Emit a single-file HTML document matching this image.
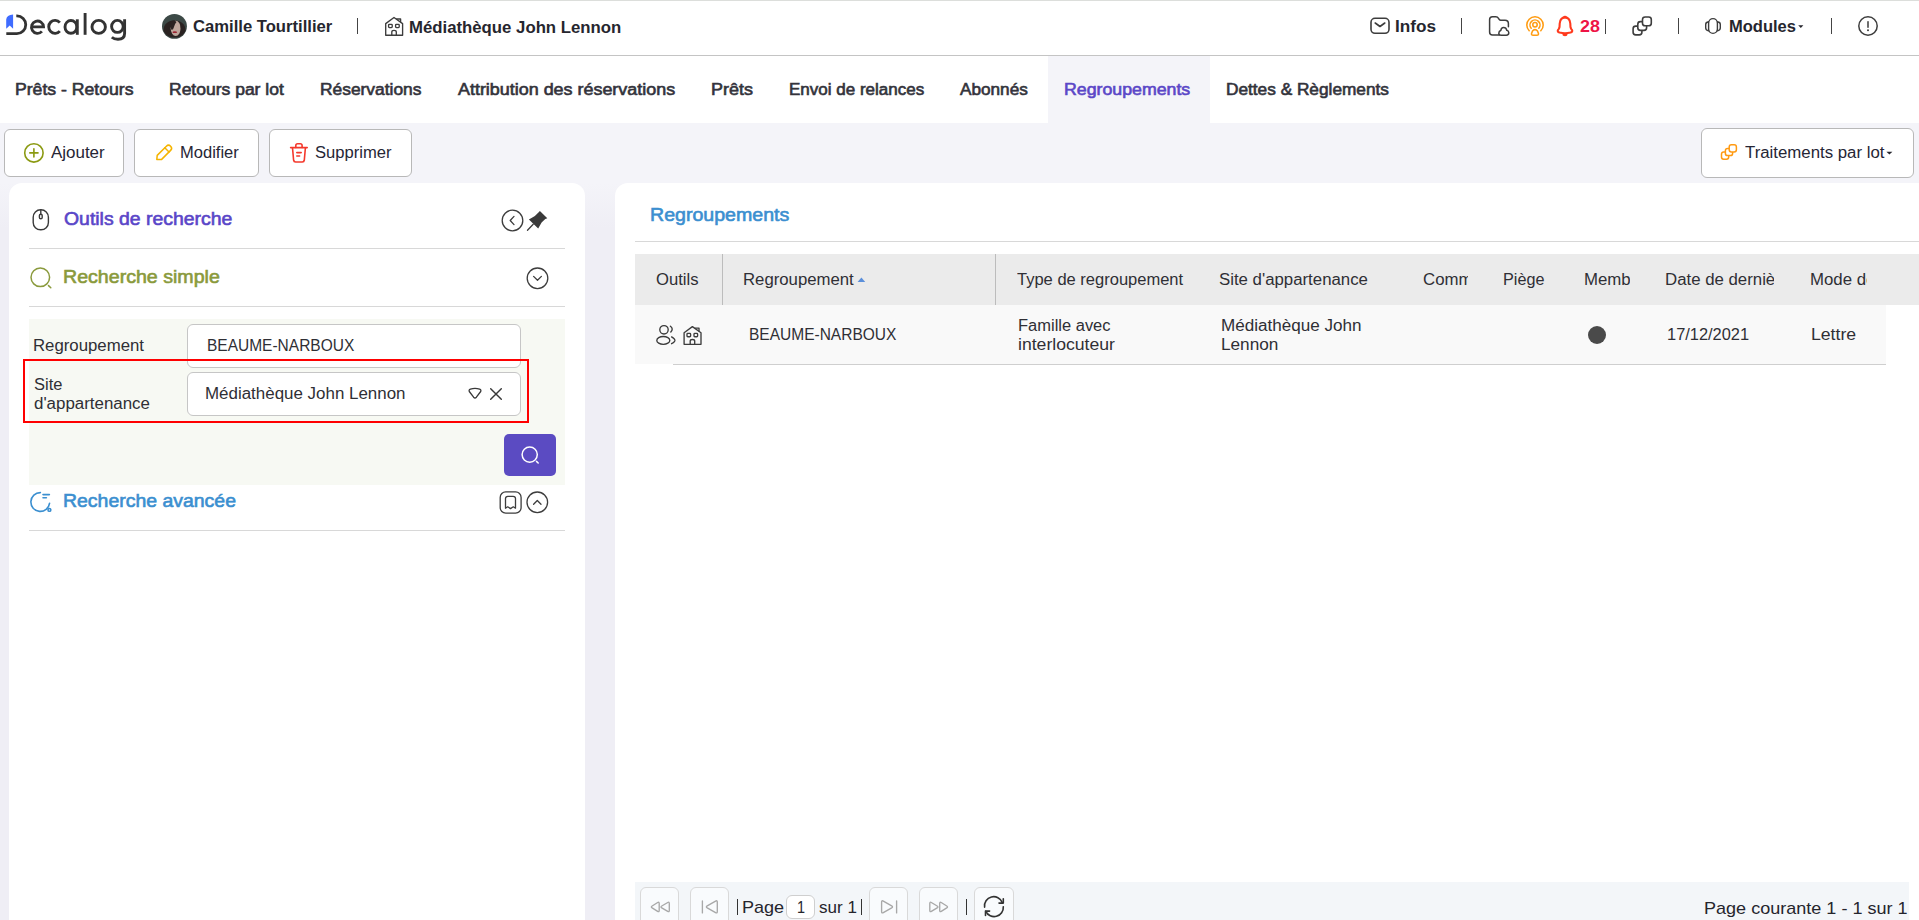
<!DOCTYPE html>
<html><head><meta charset="utf-8"><title>Regroupements</title>
<style>
html,body{margin:0;padding:0;}
body{width:1919px;height:920px;overflow:hidden;position:relative;background:#fff;font-family:"Liberation Sans",sans-serif;}
.abs{position:absolute;box-sizing:border-box;}
.t{position:absolute;white-space:nowrap;line-height:1;transform-origin:0 0;}
.btn{position:absolute;box-sizing:border-box;background:#fff;border:1px solid #b8b8b8;border-radius:6px;}
.panel{background:#fff;border-radius:13px;}
.inp{position:absolute;box-sizing:border-box;background:#fff;border:1px solid #c6c6c6;border-radius:6px;}
.pbtn{position:absolute;box-sizing:border-box;height:40px;background:#f9fbfd;border:1px solid #d9d9d9;border-radius:6px;}
svg{position:absolute;overflow:visible;}
</style></head><body>
<div class="abs" style="left:0;top:0;width:1919px;height:1px;background:#dcdedb"></div>
<div class="abs" style="left:0;top:55px;width:1919px;height:1px;background:#c4c4c4"></div>
<div class="abs" style="left:0;top:123px;width:1919px;height:797px;background:#f4f4f9"></div>
<div class="abs" style="left:0;top:183px;width:1919px;height:737px;background:linear-gradient(to bottom,#f4f4f9 0px,#efeef5 45px,#efeef5 100%)"></div>
<div class="abs" style="left:1048px;top:56px;width:162px;height:67px;background:#f4f4f9"></div>
<!-- buttons -->
<div class="btn" style="left:4px;top:129px;width:120px;height:48px"></div>
<div class="btn" style="left:134px;top:129px;width:125px;height:48px"></div>
<div class="btn" style="left:269px;top:129px;width:143px;height:48px"></div>
<div class="btn" style="left:1701px;top:128px;width:213px;height:50px"></div>
<!-- panels -->
<div class="abs panel" style="left:9px;top:183px;width:576px;height:760px"></div>
<div class="abs panel" style="left:615px;top:183px;width:1340px;height:760px"></div>
<!-- left panel internals -->
<div class="abs" style="left:29px;top:248px;width:536px;height:1px;background:#d8d8d8"></div>
<div class="abs" style="left:29px;top:306px;width:536px;height:1px;background:#d8d8d8"></div>
<div class="abs" style="left:29px;top:319px;width:536px;height:166px;background:#f7f9f3"></div>
<div class="abs" style="left:29px;top:530px;width:536px;height:1px;background:#d8d8d8"></div>
<div class="inp" style="left:187px;top:324px;width:334px;height:44px"></div>
<div class="inp" style="left:187px;top:372px;width:334px;height:44px"></div>
<div class="abs" style="left:23px;top:359px;width:506px;height:64px;border:2px solid #ff0000"></div>
<div class="abs" style="left:504px;top:434px;width:52px;height:42px;background:#5b4bc2;border-radius:5px"></div>
<!-- right panel internals -->
<div class="abs" style="left:635px;top:241px;width:1284px;height:1px;background:#d8d8d8"></div>
<div class="abs" style="left:635px;top:254px;width:1284px;height:51px;background:#ebebeb"></div>
<div class="abs" style="left:722px;top:254px;width:1px;height:51px;background:#bcbcbc"></div>
<div class="abs" style="left:995px;top:254px;width:1px;height:51px;background:#bcbcbc"></div>
<div class="abs" style="left:635px;top:305px;width:1251px;height:59px;background:#f9f9f9"></div>
<div class="abs" style="left:673px;top:364px;width:1213px;height:1px;background:#cfcfcf"></div>
<div class="abs" style="left:1588px;top:326px;width:18px;height:18px;border-radius:50%;background:#4a4a4a"></div>
<!-- pager -->
<div class="abs" style="left:635px;top:882px;width:1274px;height:40px;background:#f3f6f9"></div>
<div class="pbtn" style="left:640px;top:887px;width:39px"></div>
<div class="pbtn" style="left:690px;top:887px;width:39px"></div>
<div class="pbtn" style="left:869px;top:887px;width:39px"></div>
<div class="pbtn" style="left:919px;top:887px;width:39px"></div>
<div class="pbtn" style="left:974px;top:887px;width:40px"></div>
<div class="abs" style="left:786px;top:895px;width:29px;height:24px;border:1px solid #cfcfcf;border-radius:6px;background:#fff;box-sizing:border-box"></div>
<div class="abs" style="left:737px;top:899px;width:1px;height:16px;background:#333"></div>
<div class="abs" style="left:861px;top:899px;width:1px;height:16px;background:#333"></div>
<div class="abs" style="left:966px;top:899px;width:1px;height:16px;background:#333"></div>
<!-- header separators -->
<div class="abs" style="left:357px;top:18px;width:1px;height:16px;background:#444"></div>
<div class="abs" style="left:1461px;top:18px;width:1px;height:16px;background:#444"></div>
<div class="abs" style="left:1605px;top:19px;width:1px;height:15px;background:#444"></div>
<div class="abs" style="left:1678px;top:18px;width:1px;height:16px;background:#444"></div>
<div class="abs" style="left:1831px;top:18px;width:1px;height:16px;background:#444"></div>
<svg style="left:0;top:0" width="1919" height="920" viewBox="0 0 1919 920">
<path d="M857.6,282 L865.2,282 L861.4,277.6Z" fill="#5b8fda"/>
<path d="M1886.4,151.8 L1892.4,151.8 L1889.4,154.6Z" fill="#26262e"/>
</svg>

<svg style="left:0;top:0" width="1919" height="920" viewBox="0 0 1919 920" fill="none" stroke-linecap="round" stroke-linejoin="round">
<!-- logo -->
<path d="M6.2,28.8 L6.2,19.5 Q6.6,15 13.1,14.4 L13.1,28.8 L9.7,25.6 Z" fill="#3f6cff" stroke="none"/>
<path d="M16.3,15.9 L16.9,15.9 A8.85,8.85 0 0 1 16.9,33.6 L6.3,33.6" stroke="#333" stroke-width="2.8" stroke-linecap="butt"/>
<!-- avatar -->
<circle cx="174.45" cy="26.35" r="12.45" fill="#3c4946"/>
<path d="M163.5,31 Q163.5,21 174.5,20.5 Q185.5,21 185.5,31 A12.45,12.45 0 0 1 163.5,31Z" fill="#2a2221"/>
<ellipse cx="175.7" cy="28.4" rx="5" ry="7.6" fill="#bea69c"/>
<path d="M170,21.5 Q174,19.5 176.5,22 Q174.5,24 173.8,27.5 Q173,30.5 171.2,29.5 Q170.5,25 170,21.5Z" fill="#2a2221"/>
<path d="M180.5,24 Q181.5,30 179.5,36 L183,34 Q183.5,28 180.5,24Z" fill="#2a2221"/>
<ellipse cx="174.8" cy="32.2" rx="2.3" ry="0.9" fill="#9c2633"/>
<!-- house header -->
<g stroke="#3d3d3d" stroke-width="1.35">
<path d="M385.7,35.2 L385.7,23.6 L394,17.5 L402.6,23.6 L402.6,35.2 Z"/>
<path d="M396.6,19 L400.6,19 L400.6,21.8"/>
<rect x="388.6" y="24.3" width="3.6" height="3.3" rx="0.8"/>
<rect x="395.6" y="24.3" width="3.6" height="3.3" rx="0.8"/>
<path d="M391.8,35.2 L391.8,32 Q391.8,30.4 394,30.4 Q396.3,30.4 396.3,32 L396.3,35.2"/>
</g>
<!-- mail -->
<g stroke="#3d3d3d" stroke-width="1.6">
<rect x="1371" y="18.3" width="18" height="15" rx="4"/>
<path d="M1375.2,23 L1380,26.5 L1384.8,23"/>
</g>
<!-- folder cloud -->
<g stroke="#3d3d3d" stroke-width="1.5">
<path d="M1499.3,35 L1492.5,35 Q1489.6,35 1489.6,32 L1489.6,19.6 Q1489.6,16.8 1492.5,16.8 L1495.8,16.8 Q1497.6,16.8 1498.5,18.3 L1499.3,19.6 Q1499.8,20.2 1500.6,20.2 L1505,20.2 Q1508.4,20.2 1508.4,23.5 L1508.4,26.8"/>
<path d="M1501.2,35.2 L1506.3,35.2 Q1508.8,35.2 1508.8,32.8 Q1508.8,30.8 1506.8,30.3 Q1506.2,27.4 1503.6,27.4 Q1501.1,27.4 1500.9,30.3 Q1498.8,31.2 1498.8,33.2 Q1498.8,35.2 1501.2,35.2Z"/>
</g>
<!-- podcast -->
<g stroke="#ff9c12" stroke-width="1.55">
<path d="M1529.2,30.8 A8.2,8.2 0 1 1 1540.8,30.8"/>
<path d="M1531.2,28.2 A5,5 0 1 1 1538.8,28.2"/>
<circle cx="1535" cy="24.8" r="2.2"/>
<path d="M1533.2,35.2 L1536.8,35.2 Q1538.9,35.2 1538.4,33.2 L1537.4,30.9 Q1536.6,29.6 1535,29.6 Q1533.4,29.6 1532.6,30.9 L1531.6,33.2 Q1531.1,35.2 1533.2,35.2Z"/>
</g>
<!-- bell -->
<g stroke="#ff3a1e" stroke-width="2.1">
<path d="M1565,17.4 Q1569.8,17.6 1570.3,23.5 L1570.5,27.2 Q1570.7,28.8 1572,30 Q1573,31.8 1570.5,32.6 Q1565,33.9 1559.5,32.6 Q1557,31.8 1558,30 Q1559.3,28.8 1559.5,27.2 L1559.7,23.5 Q1560.2,17.6 1565,17.4Z"/>
</g>
<ellipse cx="1565" cy="34.6" rx="2.6" ry="1.6" fill="#ff3a1e"/>
<ellipse cx="1565" cy="16.7" rx="1.8" ry="1" fill="#ff3a1e"/>
<!-- copy header -->
<g stroke="#3d3d3d" stroke-width="1.6" fill="#fff">
<rect x="1633.1" y="26.1" width="8.8" height="8.8" rx="2.6"/>
<rect x="1637.8" y="21.6" width="8.8" height="8.8" rx="2.6"/>
<rect x="1642.5" y="17" width="8.8" height="8.8" rx="2.6"/>
</g>
<!-- modules -->
<g stroke="#3d3d3d" stroke-width="1.4">
<rect x="1708.6" y="18.6" width="8.8" height="14.8" rx="4.4"/>
<path d="M1708.6,21.8 Q1705.7,22.2 1705.7,24.5 L1705.7,28 Q1705.7,30.4 1708.6,30.7"/>
<path d="M1717.4,21.8 Q1720.3,22.2 1720.3,24.5 L1720.3,28 Q1720.3,30.4 1717.4,30.7"/>
</g>
<path d="M1798.2,25.3 L1803.4,25.3 L1800.8,27.9Z" fill="#26262e"/>
<!-- info -->
<g stroke="#3d3d3d" stroke-width="1.5">
<circle cx="1868" cy="26" r="9.2"/>
<path d="M1868,21.8 L1868,27.2"/>
</g>
<circle cx="1868" cy="30.2" r="1" fill="#3d3d3d"/>
<!-- plus circle -->
<g stroke="#8b9a12" stroke-width="1.6">
<circle cx="33.9" cy="152.9" r="9.2"/>
<path d="M29.8,152.9 L38,152.9 M33.9,148.8 L33.9,157"/>
</g>
<!-- pencil -->
<g stroke="#f5b400" stroke-width="1.5">
<path d="M156.8,159.6 L157.2,155.4 L166.4,146.2 Q168.5,144.1 170.6,146.2 Q172.7,148.3 170.6,150.4 L161.4,159.6 Z"/>
<path d="M164.8,147.8 L169,152"/>
</g>
<!-- trash -->
<g stroke="#f4382c" stroke-width="1.6">
<path d="M290.6,147.6 L307.2,147.6"/>
<path d="M295.8,147.4 L295.8,145.6 Q295.8,143.8 297.6,143.8 L300.3,143.8 Q302.1,143.8 302.1,145.6 L302.1,147.4"/>
<path d="M292.5,147.8 L293.6,160.2 Q293.8,162 295.6,162 L302.3,162 Q304.1,162 304.3,160.2 L305.4,147.8"/>
<path d="M296.8,152.6 L301.2,152.6 M296.8,156 L299.6,156"/>
</g>
<!-- copy orange -->
<g stroke="#ff9a12" stroke-width="1.5" fill="#fff">
<rect x="1721.5" y="152" width="7.2" height="7.2" rx="2.2"/>
<rect x="1725.4" y="148.4" width="7.2" height="7.2" rx="2.2"/>
<rect x="1729.2" y="144.7" width="7.2" height="7.2" rx="2.2"/>
</g>
<!-- mouse -->
<g stroke="#3a3a3a" stroke-width="1.4">
<rect x="33.2" y="209.8" width="15.2" height="20" rx="7.4"/>
<rect x="39.4" y="214.2" width="2.8" height="4.6" rx="1.4"/>
<path d="M40.8,210 L40.8,214.2"/>
</g>
<!-- circle left + pin -->
<g stroke="#3d3d3d" stroke-width="1.3">
<circle cx="512.5" cy="220.5" r="10.3"/>
<path d="M514,216.4 L510.2,220.5 L514,224.6"/>
<path d="M533.2,224.3 L527.5,230.2" stroke-width="1.3"/>
</g>
<path d="M539.9,210.9 L547.3,218.2 L545.3,218.9 L541.6,222.6 L538.2,228.6 L528.9,219.4 L534.9,216 L538.7,212.3 Z" fill="#3a3a3a"/>
<!-- search olive -->
<g stroke="#8a9a3c" stroke-width="1.5">
<circle cx="40.3" cy="277.3" r="9.3"/>
<path d="M48.5,285.6 L50.8,287.8"/>
</g>
<!-- circle down -->
<g stroke="#3d3d3d" stroke-width="1.3">
<circle cx="537.5" cy="278.3" r="10.3"/>
<path d="M533.6,276.4 L537.5,280.2 L541.4,276.4"/>
</g>
<!-- dropdown + X -->
<g stroke="#383838" stroke-width="1.3">
<path d="M470.4,389.1 Q475,387.7 479.6,389.1 Q481.4,389.8 480.7,391.5 L476.4,397.2 Q475,398.8 473.6,397.2 L469.3,391.5 Q468.6,389.8 470.4,389.1Z"/>
<path d="M490.7,388.7 L501.3,399.2 M501.3,388.7 L490.7,399.2" stroke-width="1.45"/>
</g>
<!-- white search -->
<g stroke="#fff" stroke-width="1.5">
<circle cx="529.7" cy="454.6" r="7.6"/>
<path d="M536.5,461.4 L538.2,463"/>
</g>
<!-- advanced search -->
<g stroke="#3b8fd0" stroke-width="1.6">
<path d="M40.4,492.6 A9.4,9.4 0 1 0 49.6,503.2"/>
<path d="M43,494.6 L49.4,494.6 M43,497.7 L46.4,497.7"/>
<circle cx="49.4" cy="509.9" r="1.4"/>
</g>
<!-- bookmark + circle up -->
<g stroke="#3d3d3d" stroke-width="1.3">
<rect x="500.2" y="491.9" width="20.9" height="21.2" rx="5.5"/>
<path d="M505.5,508.2 L505.5,498.6 Q505.5,496.3 507.9,496.3 L513.1,496.3 Q515.5,496.3 515.5,498.6 L515.5,508.2 L513.3,506.8 L510.5,508.6 L507.7,506.8 Z"/>
<circle cx="537.3" cy="502.3" r="10.3"/>
<path d="M533.6,504.2 L537.3,500.5 L541,504.2"/>
</g>
<!-- users -->
<g stroke="#3a3a3a" stroke-width="1.35">
<circle cx="664" cy="329.8" r="4.2"/>
<ellipse cx="663.3" cy="340.4" rx="6.5" ry="3.9"/>
<path d="M670.4,326.2 Q673.8,328.8 670.8,332"/>
<path d="M671.6,336.9 Q675.5,339.3 674.8,341 Q674,342.6 671.6,343.7"/>
</g>
<!-- house row -->
<g stroke="#3d3d3d" stroke-width="1.35" transform="translate(298.4,309.1)">
<path d="M385.7,35.2 L385.7,23.6 L394,17.5 L402.6,23.6 L402.6,35.2 Z"/>
<path d="M396.6,19 L400.6,19 L400.6,21.8"/>
<rect x="388.6" y="24.3" width="3.6" height="3.3" rx="0.8"/>
<rect x="395.6" y="24.3" width="3.6" height="3.3" rx="0.8"/>
<path d="M391.8,35.2 L391.8,32 Q391.8,30.4 394,30.4 Q396.3,30.4 396.3,32 L396.3,35.2"/>
</g>
<!-- pager icons -->
<g stroke="#a8a8a8" stroke-width="1.35">
<path d="M652.13,906.00 L657.67,902.55 Q659.20,901.60 659.20,903.40 L659.20,910.50 Q659.20,912.30 657.67,911.35 L652.13,907.90 Q650.60,906.95 652.13,906.00 Z"/>
<path d="M661.75,906.04 L667.75,902.51 Q669.30,901.60 669.30,903.40 L669.30,910.50 Q669.30,912.30 667.75,911.39 L661.75,907.86 Q660.20,906.95 661.75,906.04 Z"/>
<path d="M702.4,900.9 L702.4,912.9"/>
<path d="M707.23,905.90 L715.57,901.10 Q717.30,900.10 717.30,902.10 L717.30,911.60 Q717.30,913.60 715.56,912.61 L707.24,907.89 Q705.50,906.90 707.23,905.90 Z"/>
<path d="M891.67,905.90 L883.33,901.10 Q881.60,900.10 881.60,902.10 L881.60,911.60 Q881.60,913.60 883.34,912.61 L891.66,907.89 Q893.40,906.90 891.67,905.90 Z"/>
<path d="M896.6,900.9 L896.6,912.9"/>
<path d="M946.77,906.00 L941.23,902.55 Q939.70,901.60 939.70,903.40 L939.70,910.50 Q939.70,912.30 941.23,911.35 L946.77,907.90 Q948.30,906.95 946.77,906.00 Z"/>
<path d="M937.16,906.02 L931.34,902.53 Q929.80,901.60 929.80,903.40 L929.80,910.50 Q929.80,912.30 931.34,911.37 L937.16,907.88 Q938.70,906.95 937.16,906.02 Z"/>
</g>
<g stroke="#333" stroke-width="1.6">
<path d="M984.6,907.2 A9.2,9.2 0 0 1 1002.3,902.6"/>
<path d="M1003.3,898.7 L1003.3,903.1 L999,903.1"/>
<path d="M1003.3,906.7 A9.2,9.2 0 0 1 985.8,911.3"/>
<path d="M985.5,915.5 L985.5,911.1 L989.6,911.1"/>
</g>
</svg>
<svg style="left:0;top:0" width="140" height="50" viewBox="0 0 140 50" fill="none" stroke="#333" stroke-width="2.9">
<path d="M31.6,26.9 L43.5,26.9 A6,6.2 0 1 0 41.9,31.4"/>
<path d="M59.8,22.6 A6.3,6.5 0 1 0 59.8,31.1"/>
<ellipse cx="70.9" cy="26.9" rx="5.9" ry="6.4"/>
<path d="M77.3,19.3 L77.3,34.8" stroke-linecap="butt"/>
<path d="M85.1,13 L85.1,34.8" stroke-linecap="butt"/>
<ellipse cx="98.7" cy="26.9" rx="6.7" ry="6.5"/>
<ellipse cx="117.4" cy="26.4" rx="5.8" ry="6"/>
<path d="M124.6,19.3 L124.6,33.5 Q124.6,39.2 118,39.2 Q114,39.2 111.8,37.2" stroke-linecap="butt"/>
</svg>


<div class="t" style="left:192.70px;top:19.00px;font-size:16px;font-weight:bold;color:#26262e;transform:scaleX(1.0394);">Camille Tourtillier</div>
<div class="t" style="left:408.95px;top:20.00px;font-size:16px;font-weight:bold;color:#26262e;transform:scaleX(1.0473);">Médiathèque John Lennon</div>
<div class="t" style="left:1394.93px;top:19.00px;font-size:16px;font-weight:bold;color:#26262e;transform:scaleX(1.0718);">Infos</div>
<div class="t" style="left:1580.00px;top:19.00px;font-size:16px;font-weight:bold;color:#ee1445;transform:scaleX(1.1174);">28</div>
<div class="t" style="left:1728.97px;top:19.00px;font-size:16px;font-weight:bold;color:#26262e;transform:scaleX(1.0314);">Modules</div>
<div class="t" style="left:14.50px;top:82.00px;font-size:16px;-webkit-text-stroke:0.6px currentColor;color:#33333b;transform:scaleX(1.1015);">Prêts - Retours</div>
<div class="t" style="left:168.61px;top:82.00px;font-size:16px;-webkit-text-stroke:0.6px currentColor;color:#33333b;transform:scaleX(1.0939);">Retours par lot</div>
<div class="t" style="left:319.51px;top:82.00px;font-size:16px;-webkit-text-stroke:0.6px currentColor;color:#33333b;transform:scaleX(1.0858);">Réservations</div>
<div class="t" style="left:457.80px;top:82.00px;font-size:16px;-webkit-text-stroke:0.6px currentColor;color:#33333b;transform:scaleX(1.1198);">Attribution des réservations</div>
<div class="t" style="left:710.88px;top:82.00px;font-size:16px;-webkit-text-stroke:0.6px currentColor;color:#33333b;transform:scaleX(1.1226);">Prêts</div>
<div class="t" style="left:788.54px;top:82.00px;font-size:16px;-webkit-text-stroke:0.6px currentColor;color:#33333b;transform:scaleX(1.0627);">Envoi de relances</div>
<div class="t" style="left:960.20px;top:82.00px;font-size:16px;-webkit-text-stroke:0.6px currentColor;color:#33333b;transform:scaleX(1.0734);">Abonnés</div>
<div class="t" style="left:1063.79px;top:82.00px;font-size:16px;-webkit-text-stroke:0.6px currentColor;color:#5b47c7;transform:scaleX(1.1086);">Regroupements</div>
<div class="t" style="left:1225.82px;top:82.00px;font-size:16px;-webkit-text-stroke:0.6px currentColor;color:#33333b;transform:scaleX(1.0777);">Dettes &amp; Règlements</div>
<div class="t" style="left:50.60px;top:145.00px;font-size:16px;color:#262635;transform:scaleX(1.0590);">Ajouter</div>
<div class="t" style="left:180.07px;top:145.00px;font-size:16px;color:#262635;transform:scaleX(1.0322);">Modifier</div>
<div class="t" style="left:315.30px;top:145.00px;font-size:16px;color:#262635;transform:scaleX(1.0366);">Supprimer</div>
<div class="t" style="left:1745.00px;top:145.00px;font-size:16px;color:#262635;transform:scaleX(1.0499);">Traitements par lot</div>
<div class="t" style="left:63.80px;top:210.00px;font-size:18px;-webkit-text-stroke:0.6px currentColor;color:#5a46c8;transform:scaleX(1.0778);">Outils de recherche</div>
<div class="t" style="left:62.71px;top:268.00px;font-size:18px;-webkit-text-stroke:0.6px currentColor;color:#8a9a3c;transform:scaleX(1.0884);">Recherche simple</div>
<div class="t" style="left:33.45px;top:338.00px;font-size:16px;color:#2f2f35;transform:scaleX(1.0484);">Regroupement</div>
<div class="t" style="left:207.13px;top:338.00px;font-size:16px;color:#2f2f35;transform:scaleX(0.9686);">BEAUME-NARBOUX</div>
<div class="t" style="left:33.70px;top:377.00px;font-size:16px;color:#2f2f35;transform:scaleX(1.0299);">Site</div>
<div class="t" style="left:33.90px;top:396.00px;font-size:16px;color:#2f2f35;transform:scaleX(1.0554);">d'appartenance</div>
<div class="t" style="left:205.19px;top:386.00px;font-size:16px;color:#2f2f35;transform:scaleX(1.0581);">Médiathèque John Lennon</div>
<div class="t" style="left:62.67px;top:492.00px;font-size:18px;-webkit-text-stroke:0.6px currentColor;color:#3b8fd0;transform:scaleX(1.0802);">Recherche avancée</div>
<div class="t" style="left:649.61px;top:206.00px;font-size:18px;-webkit-text-stroke:0.6px currentColor;color:#3b8fd0;transform:scaleX(1.0876);">Regroupements</div>
<div class="t" style="left:656.20px;top:272.00px;font-size:16px;color:#2f2f35;transform:scaleX(1.0392);">Outils</div>
<div class="t" style="left:742.85px;top:272.00px;font-size:16px;color:#2f2f35;transform:scaleX(1.0465);">Regroupement</div>
<div class="t" style="left:1017.00px;top:272.00px;font-size:16px;color:#2f2f35;transform:scaleX(1.0319);">Type de regroupement</div>
<div class="t" style="left:1219.20px;top:272.00px;font-size:16px;color:#2f2f35;transform:scaleX(1.0498);">Site d'appartenance</div>
<div class="t" style="left:1502.99px;top:272.00px;font-size:16px;color:#2f2f35;transform:scaleX(1.0119);">Piège</div>
<div class="abs" style="left:0;top:0;width:1468.3px;height:920px;overflow:hidden"><div class="t" style="left:1422.60px;top:272.00px;font-size:16px;color:#2f2f35;transform:scaleX(1.0500);">Commentaire</div></div>
<div class="abs" style="left:0;top:0;width:1630.0px;height:920px;overflow:hidden"><div class="t" style="left:1584.15px;top:272.00px;font-size:16px;color:#2f2f35;transform:scaleX(1.0500);">Membres</div></div>
<div class="abs" style="left:0;top:0;width:1773.5px;height:920px;overflow:hidden"><div class="t" style="left:1665.45px;top:272.00px;font-size:16px;color:#2f2f35;transform:scaleX(1.0500);">Date de dernière relance</div></div>
<div class="abs" style="left:0;top:0;width:1866.6px;height:920px;overflow:hidden"><div class="t" style="left:1809.55px;top:272.00px;font-size:16px;color:#2f2f35;transform:scaleX(1.0500);">Mode de relance</div></div>
<div class="t" style="left:748.63px;top:327.00px;font-size:16px;color:#2f2f35;transform:scaleX(0.9693);">BEAUME-NARBOUX</div>
<div class="t" style="left:1017.57px;top:318.00px;font-size:16px;color:#2f2f35;transform:scaleX(1.0304);">Famille avec</div>
<div class="t" style="left:1017.50px;top:337.00px;font-size:16px;color:#2f2f35;transform:scaleX(1.1001);">interlocuteur</div>
<div class="t" style="left:1220.73px;top:318.00px;font-size:16px;color:#2f2f35;transform:scaleX(1.0674);">Médiathèque John</div>
<div class="t" style="left:1220.73px;top:337.00px;font-size:16px;color:#2f2f35;transform:scaleX(1.0739);">Lennon</div>
<div class="t" style="left:1666.57px;top:327.00px;font-size:16px;color:#2f2f35;transform:scaleX(1.0255);">17/12/2021</div>
<div class="t" style="left:1811.10px;top:327.00px;font-size:16px;color:#2f2f35;transform:scaleX(1.1021);">Lettre</div>
<div class="t" style="left:741.64px;top:899.00px;font-size:17px;color:#25252d;transform:scaleX(1.0615);">Page</div>
<div class="t" style="left:796.55px;top:899.00px;font-size:17px;color:#25252d;transform:scaleX(0.8500);">1</div>
<div class="t" style="left:819.00px;top:899.00px;font-size:17px;color:#25252d;transform:scaleX(1.0016);">sur 1</div>
<div class="t" style="left:1704.14px;top:900.00px;font-size:17px;color:#25252d;transform:scaleX(1.0610);">Page courante 1 - 1 sur 1</div>
</body></html>
